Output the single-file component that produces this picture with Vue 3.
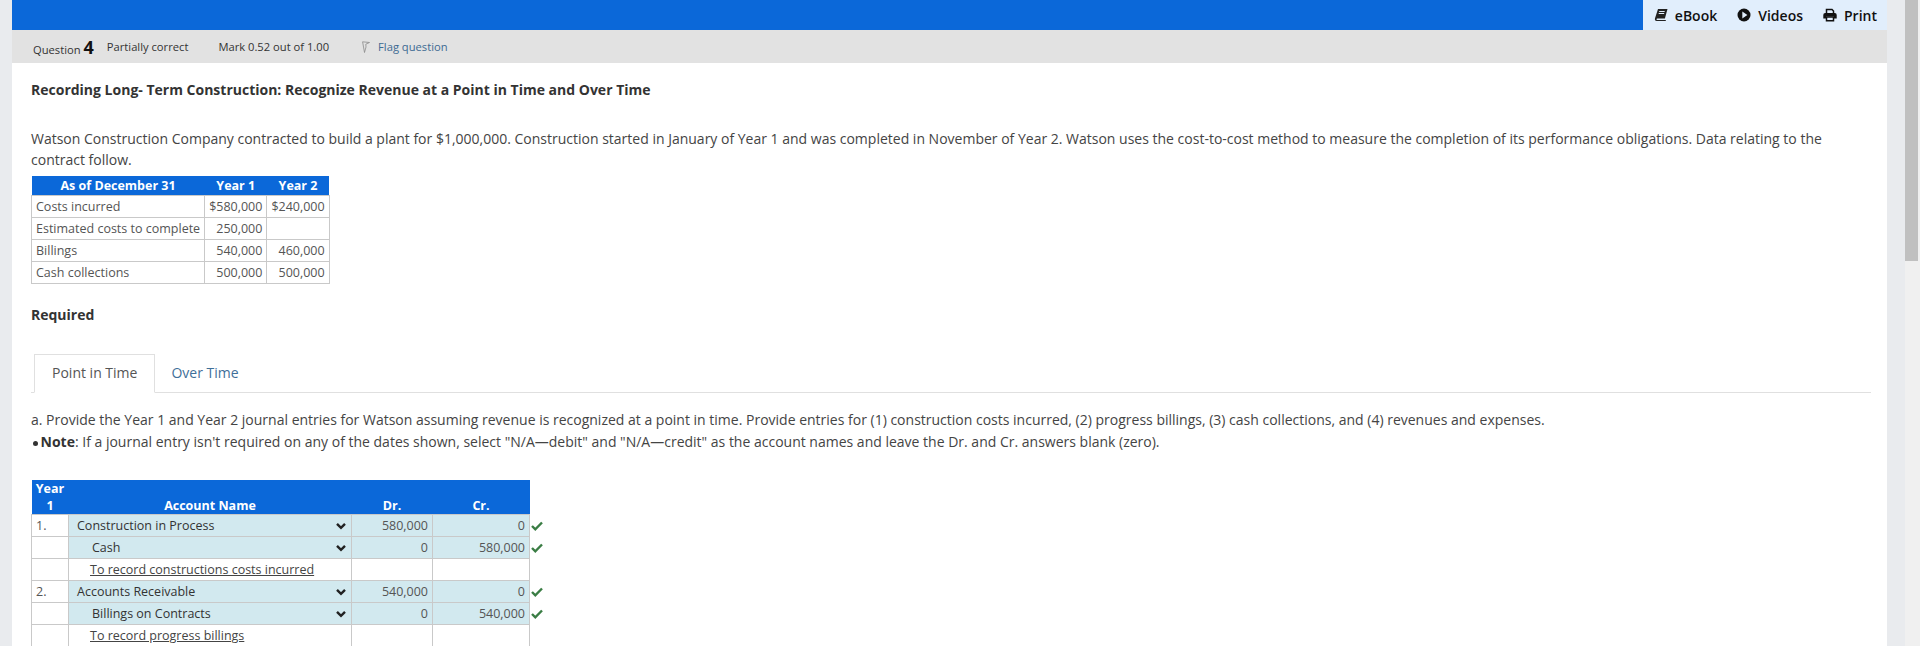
<template>
  <div class="page">
    <div class="side"></div>
    <main class="main">
      <header class="topbar">
        <div class="tools">
          <span class="tool">
            <svg width="14" height="14" viewBox="0 0 14 14"><path d="M4 1h9.500l-2.600 9.500H3.300c-1 0-1.200 1.400 0 1.400h8.700l-.4 1.100H2.700C1.200 13 .6 11.800 1 10.300z" fill="#222"/><path d="M5.200 3.500h5.500M4.700 5.500h5.500" stroke="#e1eefc" stroke-width="1"/></svg>
            eBook
          </span>
          <span class="tool">
            <svg width="14" height="14" viewBox="0 0 14 14"><circle cx="7" cy="7" r="6.500" fill="#111"/><path d="M5.300 3.600 10.400 7 5.300 10.400z" fill="#e1eefc"/></svg>
            Videos
          </span>
          <span class="tool">
            <svg width="14" height="14" viewBox="0 0 14 14"><path d="M3.500 5.500V1.500h5.500l1.500 1.500v2.500" fill="none" stroke="#111" stroke-width="1.500"/><path d="M2.200 5h9.600A1.900 1.900 0 0 1 13.700 6.900V10.500H11V8.500H3v2H.3V6.900A1.900 1.900 0 0 1 2.200 5z" fill="#111"/><path d="M3.500 9h7v3.800h-7z" fill="none" stroke="#111" stroke-width="1.500"/></svg>
            Print
          </span>
        </div>
      </header>
      <div class="qbar">
        <span class="qno">Question <b>4</b></span>
        <span class="qstate">Partially correct</span>
        <span class="qmark">Mark 0.52 out of 1.00</span>
        <span class="qflag">
          <svg width="8" height="12" viewBox="0 0 8 12"><path d="M2.500 11.500 .6 .8 7.500 1.500 3.800 3.200 4 6z" fill="none" stroke="#8a8a8a" stroke-width=".8"/></svg>
          Flag question
        </span>
      </div>
      <section class="content">
        <h1 class="title">Recording Long- Term Construction: Recognize Revenue at a Point in Time and Over Time</h1>
        <p class="intro">Watson Construction Company contracted to build a plant for $1,000,000. Construction started in January of Year 1 and was completed in November of Year 2. Watson uses the cost-to-cost method to measure the completion of its performance obligations. Data relating to the contract follow.</p>
        <table class="data">
          <thead>
            <tr><th>As of December 31</th><th>Year 1</th><th>Year 2</th></tr>
          </thead>
          <tbody>
            <tr v-for="row in contractRows" :key="row[0]">
              <td class="label">{{ row[0] }}</td>
              <td class="num">{{ row[1] }}</td>
              <td class="num">{{ row[2] }}</td>
            </tr>
          </tbody>
        </table>
        <h2 class="required">Required</h2>
        <div class="tabs">
          <span class="tab active">Point in Time</span>
          <span class="tab">Over Time</span>
        </div>
        <p class="task">a. Provide the Year 1 and Year 2 journal entries for Watson assuming revenue is recognized at a point in time. Provide entries for (1) construction costs incurred, (2) progress billings, (3) cash collections, and (4) revenues and expenses.<br><span class="dot"></span><b>Note</b>: If a journal entry isn't required on any of the dates shown, select "N/A—debit" and "N/A—credit" as the account names and leave the Dr. and Cr. answers blank (zero).</p>
        <table class="journal">
          <thead>
            <tr>
              <th class="c-year">Year<br>1</th>
              <th class="c-acct">Account Name</th>
              <th class="c-dr">Dr.</th>
              <th class="c-cr">Cr.</th>
            </tr>
          </thead>
          <tbody>
            <template v-for="row in journalRows" :key="row.name">
              <tr v-if="row.memo">
                <td></td>
                <td class="memo"><u>{{ row.name }}</u></td>
                <td></td>
                <td></td>
              </tr>
              <tr v-else>
                <td class="no">{{ row.no }}</td>
                <td class="acct" :class="{ indent: row.indent }">
                  <span>{{ row.name }}</span>
                  <svg width="12" height="8" viewBox="0 0 12 8"><path d="M2 1.800 6 5.800 10 1.800" fill="none" stroke="#222" stroke-width="2.400"/></svg>
                </td>
                <td class="amt">{{ row.dr }}</td>
                <td class="amt cr">
                  {{ row.cr }}
                  <svg class="check" width="12" height="10" viewBox="0 0 12 10"><path d="M1 5 4.300 8.300 11 1.500" fill="none" stroke="#3a7d44" stroke-width="2.400"/></svg>
                </td>
              </tr>
            </template>
          </tbody>
        </table>
      </section>
    </main>
    <div class="gutter"></div>
    <div class="scroll"><div class="thumb"></div></div>
  </div>
</template>

<script setup>
const contractRows = [
  ['Costs incurred', '$580,000', '$240,000'],
  ['Estimated costs to complete', '250,000', ''],
  ['Billings', '540,000', '460,000'],
  ['Cash collections', '500,000', '500,000']
]

const journalRows = [
  { no: '1.', name: 'Construction in Process', dr: '580,000', cr: '0' },
  { name: 'Cash', indent: true, dr: '0', cr: '580,000' },
  { name: 'To record constructions costs incurred', memo: true },
  { no: '2.', name: 'Accounts Receivable', dr: '540,000', cr: '0' },
  { name: 'Billings on Contracts', indent: true, dr: '0', cr: '540,000' },
  { name: 'To record progress billings', memo: true }
]
</script>

<style>
html, body {
  margin: 0;
  height: 646px;
  overflow: hidden;
}
</style>

<style scoped>
.page {
  display: flex;
  height: 646px;
  overflow: hidden;
  font-family: "Open Sans", "Noto Sans", sans-serif;
  font-size: 14px;
  color: #444;
  background: #fff;
}
.side {
  width: 12px;
  flex: none;
  background: #e9ebee;
}
.main {
  width: 1875px;
  flex: none;
}
.gutter {
  width: 18px;
  flex: none;
  background: #e9ebee;
}
.scroll {
  width: 15px;
  flex: none;
  background: #f0f0f0;
}
.thumb {
  width: 13px;
  height: 261px;
  background: #c0c0c0;
}
.topbar {
  height: 30px;
  background: #0b68d9;
  display: flex;
  justify-content: flex-end;
}
.tools {
  width: 244px;
  box-sizing: border-box;
  background: #e1eefc;
  display: flex;
  align-items: center;
  justify-content: flex-end;
  gap: 20px;
  padding-right: 10px;
}
.tool {
  display: flex;
  align-items: center;
  gap: 7px;
  font-weight: 600;
  font-size: 14px;
  color: #111;
}
.qbar {
  height: 33px;
  background: #e2e2e2;
  display: flex;
  align-items: center;
  padding-left: 21px;
  font-size: 11.200px;
  color: #333;
}
.qno b {
  font-size: 18px;
  font-weight: 700;
  color: #111;
}
.qstate {
  margin-left: 13px;
}
.qmark {
  margin-left: 30px;
}
.qflag {
  margin-left: 33px;
  color: #3d6a93;
  display: flex;
  align-items: center;
  gap: 8px;
}
.content {
  padding: 0 16px 0 19px;
}
.title {
  margin: 0;
  padding-top: 17px;
  font-size: 14px;
  line-height: 19px;
  font-weight: 700;
  color: #333;
}
.intro {
  margin: 29px 0 0;
  line-height: 21px;
  font-size: 14px;
  color: #444;
}
.data {
  margin-top: 6px;
  border-collapse: collapse;
  font-size: 12.500px;
}
.data th {
  background: #0b68d9;
  color: #fff;
  font-weight: 700;
  height: 19px;
  padding: 0 4px;
  line-height: 18px;
}
.data td {
  border: 1px solid #c9c9c9;
  height: 21px;
  padding: 0 4px;
  line-height: 18px;
  color: #555;
}
.num {
  text-align: right;
}
.required {
  margin: 21px 0 0;
  font-size: 14px;
  line-height: 19px;
  font-weight: 700;
  color: #333;
}
.tabs {
  margin-top: 30px;
  display: flex;
  border-bottom: 1px solid #e0e0e0;
  height: 38px;
}
.tab {
  box-sizing: border-box;
  padding: 0 16px;
  height: 39px;
  line-height: 38px;
  color: #3f6f99;
}
.tab.active {
  margin-left: 3px;
  padding: 0 17px;
  line-height: 36px;
  border: 1px solid #e0e0e0;
  border-bottom: 1px solid #fff;
  color: #555;
}
.task {
  margin: 16px 0 0;
  line-height: 22px;
  font-size: 14px;
}
.dot {
  display: inline-block;
  width: 5px;
  height: 5px;
  margin: 0 2.500px 1px 2px;
  border-radius: 50%;
  background: #333;
}
.task b {
  color: #333;
}
.journal {
  margin-top: 27px;
  border-collapse: collapse;
  table-layout: fixed;
  width: 498px;
  font-size: 12.500px;
}
.journal th {
  background: #0b68d9;
  color: #fff;
  font-weight: 700;
  line-height: 17px;
  padding: 0;
  vertical-align: bottom;
}
.c-year {
  width: 37px;
}
.c-acct {
  width: 283px;
}
.c-dr {
  width: 81px;
}
.c-cr {
  width: 97px;
}
.journal td {
  border: 1px solid #c9c9c9;
  height: 21px;
  padding: 0;
  line-height: 18px;
  color: #555;
}
.no {
  padding: 1px 0 0 4px !important;
  height: 20px !important;
}
.acct {
  position: relative;
  background: #d2e9ef;
  color: #333 !important;
  padding: 1px 8px 0 !important;
  height: 20px !important;
}
.acct span {
  display: inline-block;
}
.acct svg {
  position: absolute;
  right: 4px;
  top: 7px;
}
.acct.indent {
  padding-left: 23px !important;
}
.memo {
  padding-left: 21px !important;
  color: #444 !important;
}
.amt {
  background: #d2e9ef;
  text-align: right;
  padding: 1px 4px 0 0 !important;
  height: 20px !important;
  position: relative;
}
.check {
  position: absolute;
  right: -14px;
  top: 6px;
}
</style>
